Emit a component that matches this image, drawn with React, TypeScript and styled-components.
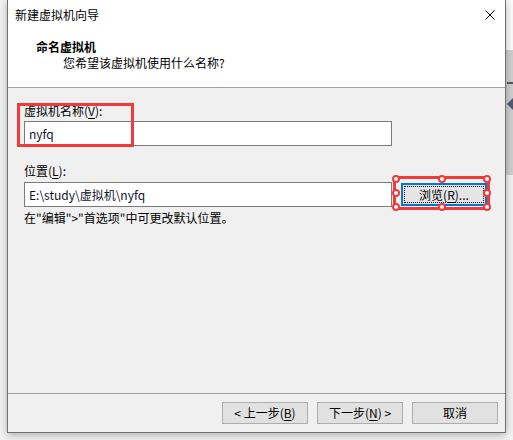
import React from 'react'
import styled, { createGlobalStyle } from 'styled-components'

const GlobalStyle = createGlobalStyle`
    html, body {
        margin: 0;
        padding: 0;
        background: #f2f2f2;
    }
    body {
        font-family: "Noto Sans CJK SC", "Noto Sans", sans-serif;
        font-size: 12px;
        color: #000;
    }
`

const Desktop = styled.div`
    width: 513px;
    height: 440px;
    display: flex;
    overflow: hidden;
    background: #f2f2f2;
`
const Gutter = styled.div`
    width: 7px;
    flex: none;
`
const Window = styled.div`
    width: 499px;
    height: 433px;
    flex: none;
    box-sizing: border-box;
    border: 1px solid #6f6f6f;
    border-top: none;
    display: flex;
    flex-direction: column;
    background: #f0f0f0;
    box-shadow: 0 2px 8px rgba(0, 0, 0, 0.28);
    position: relative;
    z-index: 1;
`
const TitleBar = styled.div`
    height: 30px;
    flex: none;
    background: #fff;
    display: flex;
    align-items: center;
    justify-content: space-between;
    padding: 0 10px 0 7px;
    line-height: 16px;
`
const CloseButton = styled.div`
    width: 10px;
    height: 10px;
    display: flex;
`
const Header = styled.div`
    height: 58px;
    flex: none;
    box-sizing: border-box;
    background: #fff;
    border-bottom: 1px solid #a0a0a0;
    padding: 9px 0 0 28px;
    line-height: 16px;
`
const HeaderTitle = styled.div`
    font-weight: 700;
`
const HeaderSub = styled.div`
    padding-left: 27px;
`
const Body = styled.div`
    flex: 1;
    padding: 14px 0 0 16px;
    display: flex;
    flex-direction: column;
`
const Field = styled.div<{ gap?: number }>`
    position: relative;
    display: flex;
    flex-direction: column;
    gap: ${(p) => p.gap ?? 1}px;
`
const Label = styled.div`
    line-height: 18px;
`
const Key = styled.span`
    text-decoration: underline;
    text-underline-offset: 2px;
`
const TextBox = styled.div`
    width: 368px;
    height: 25px;
    box-sizing: border-box;
    border: 1px solid #7a7a7a;
    background: #fff;
    display: flex;
    align-items: center;
    padding-left: 4px;
    color: #101030;
    line-height: 16px;
`
const Row = styled.div`
    display: flex;
    align-items: flex-start;
    gap: 9px;
`
const BrowseWrap = styled.div`
    position: relative;
    margin-top: 1px;
`
const BrowseButton = styled.div`
    width: 86px;
    height: 23px;
    box-sizing: border-box;
    border: 2px solid #0078d7;
    background: #e5e5e5;
    padding: 1px;
    display: flex;
`
const FocusRect = styled.div`
    flex: 1;
    border: 1px dotted #000;
    display: flex;
    align-items: center;
    justify-content: center;
    line-height: 14px;
`
const RedFrame = styled.div<{ top: number; left: number; width: number; height: number }>`
    position: absolute;
    top: ${(p) => p.top}px;
    left: ${(p) => p.left}px;
    width: ${(p) => p.width}px;
    height: ${(p) => p.height}px;
    box-sizing: border-box;
    border: 3px solid #f23a3a;
    pointer-events: none;
`
const Handle = styled.div<{ x: number; y: number }>`
    position: absolute;
    left: ${(p) => p.x}%;
    top: ${(p) => p.y}%;
    width: 8px;
    height: 8px;
    box-sizing: border-box;
    margin: -4px 0 0 -4px;
    border-radius: 50%;
    border: 2px solid #f23a3a;
    background: #fff;
`
const Hint = styled.div`
    line-height: 18px;
    margin-top: 2px;
`
const Footer = styled.div`
    flex: none;
    border-top: 1px solid #a0a0a0;
    padding: 8px 7px 8px 0;
    display: flex;
    justify-content: flex-end;
    gap: 9px;
`
const Button = styled.div`
    width: 86px;
    height: 22px;
    box-sizing: border-box;
    border: 1px solid #adadad;
    background: #e1e1e1;
    display: flex;
    align-items: center;
    justify-content: center;
    line-height: 14px;
`
const SideStrip = styled.div`
    width: 7px;
    flex: none;
    display: flex;
    flex-direction: column;
`
const SideTop = styled.div`
    height: 50px;
    background: #fbfbfb;
`
const SidePanel = styled.div`
    height: 125px;
    background: #cfcfcf;
    display: flex;
    flex-direction: column;
    align-items: flex-start;
    padding-top: 32px;
    gap: 14px;
    box-sizing: border-box;
`
const SideDash = styled.div`
    width: 6px;
    height: 2px;
    margin-left: 1px;
    background: #4f5b66;
`

const handles = [
    [0, 0], [50, 0], [100, 0],
    [0, 50], [100, 50],
    [0, 100], [50, 100], [100, 100],
]

const App = () => {
    return (
        <>
            <GlobalStyle />
            <Desktop>
                <Gutter />
                <Window>
                    <TitleBar>
                        <span>新建虚拟机向导</span>
                        <CloseButton>
                            <svg width="10" height="10" viewBox="0 0 10 10">
                                <path d="M0.5 0.5 L9.5 9.5 M9.5 0.5 L0.5 9.5" stroke="#000" strokeWidth="1" />
                            </svg>
                        </CloseButton>
                    </TitleBar>
                    <Header>
                        <HeaderTitle>命名虚拟机</HeaderTitle>
                        <HeaderSub>您希望该虚拟机使用什么名称?</HeaderSub>
                    </Header>
                    <Body>
                        <Field>
                            <Label>虚拟机名称(<Key>V</Key>):</Label>
                            <TextBox>nyfq</TextBox>
                            <RedFrame top={1} left={-7} width={117} height={44} />
                        </Field>
                        <Field gap={2} style={{ marginTop: 16 }}>
                            <Label>位置(<Key>L</Key>):</Label>
                            <Row>
                                <TextBox>E:\study\虚拟机\nyfq</TextBox>
                                <BrowseWrap>
                                    <BrowseButton>
                                        <FocusRect>浏览(<Key>R</Key>)...</FocusRect>
                                    </BrowseButton>
                                    <RedFrame top={-7} left={-8} width={97} height={34}>
                                        {handles.map(([x, y]) => (
                                            <Handle key={`${x}-${y}`} x={x} y={y} />
                                        ))}
                                    </RedFrame>
                                </BrowseWrap>
                            </Row>
                        </Field>
                        <Hint>在"编辑"&gt;"首选项"中可更改默认位置。</Hint>
                    </Body>
                    <Footer>
                        <Button>&lt; 上一步(<Key>B</Key>)</Button>
                        <Button>下一步(<Key>N</Key>) &gt;</Button>
                        <Button>取消</Button>
                    </Footer>
                </Window>
                <SideStrip>
                    <SideTop />
                    <SidePanel>
                        <SideDash />
                        <svg width="7" height="12" viewBox="0 0 7 12">
                            <path d="M7 0 L1 6 L7 12 Z" fill="#4f5b66" />
                        </svg>
                    </SidePanel>
                </SideStrip>
            </Desktop>
        </>
    )
}

export default App
